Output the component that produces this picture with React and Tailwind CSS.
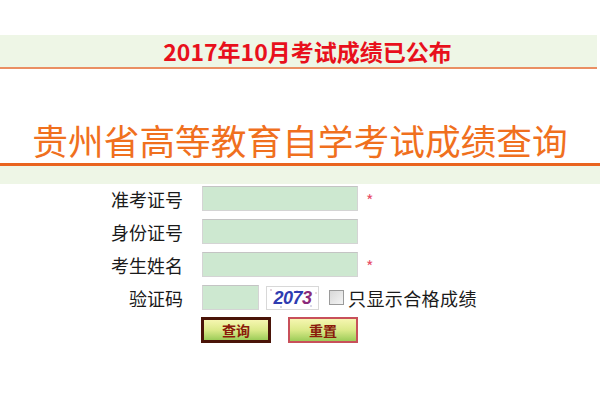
const font = { fontFamily: '"Noto Sans CJK SC", "Noto Sans", sans-serif' };

const fields = [
  { label: '准考证号', required: true },
  { label: '身份证号', required: false },
  { label: '考生姓名', required: true },
];

const Captcha = () => (
  <div className="relative w-[53px] h-[24px] bg-white border border-[#d8d8d8] flex items-center justify-center overflow-hidden">
    <svg className="absolute inset-0" width="53" height="24">
      <circle cx="4" cy="3" r="0.8" fill="#b9a" />
      <circle cx="14" cy="20" r="0.8" fill="#9ab" />
      <circle cx="30" cy="4" r="0.8" fill="#c9c" />
      <circle cx="44" cy="19" r="0.8" fill="#aac" />
      <circle cx="49" cy="6" r="0.8" fill="#caa" />
      <circle cx="22" cy="12" r="0.6" fill="#bbd" />
    </svg>
    <span className="relative text-[18px] font-bold italic leading-none tracking-[-0.5px] text-[#2e3cb0]" style={{ fontFamily: '"Liberation Sans", sans-serif' }}>
      207<span className="text-[#8a2a7a]">3</span>
    </span>
  </div>
);

const Button = ({ children, dark }) => (
  <button
    className={`w-[70px] h-[26px] flex items-center justify-center text-[14px] font-bold text-[#8a1a0a] bg-gradient-to-b from-[#f6f6b0] via-[#dcea8a] to-[#9ccc58] ${dark ? 'border-[3px] border-[#4a1408]' : 'border-2 border-[#c8505a]'}`}
    style={font}
  >
    {children}
  </button>
);

export default function App() {
  return (
    <div className="w-[600px] h-[400px] bg-white overflow-hidden" style={font}>
      <div className="h-[35px]" />
      <div className="w-[597px] h-[34px] bg-[#eef6e6] border-b-2 border-[#ea8f63] flex items-center justify-center">
        <span className="text-[23px] font-bold leading-none text-[#e8101c] pl-[18px]">2017年10月考试成绩已公布</span>
      </div>
      <div className="pt-[53px] pb-[5px] border-b-[3px] border-[#e9641f] text-center">
        <h1 className="text-[35.7px] leading-[36px] text-[#f0701e] whitespace-nowrap">贵州省高等教育自学考试成绩查询</h1>
      </div>
      <div className="h-[18px] bg-[#eef6e6]" />
      <div className="mt-[2px] flex flex-col gap-[8px]">
        {fields.map((f) => (
          <div key={f.label} className="flex items-center h-[25px]">
            <div className="w-[183px] text-right text-[18px] leading-none text-[#1a1a1a]">{f.label}</div>
            <div className="ml-[19px] w-[156px] h-[25px] bg-[#cde8d0] border border-[#d4d4d4] border-t-[#c4c4c4]" />
            {f.required && <span className="ml-[8px] text-[16px] leading-none text-[#e8506a] mt-[2px]">*</span>}
          </div>
        ))}
        <div className="flex items-center h-[25px]">
          <div className="w-[183px] text-right text-[18px] leading-none text-[#1a1a1a]">验证码</div>
          <div className="ml-[19px] w-[57px] h-[25px] bg-[#cde8d0] border border-[#d4d4d4] border-t-[#c4c4c4]" />
          <div className="ml-[7px]"><Captcha /></div>
          <div className="ml-[10px] w-[15px] h-[15px] border border-[#9a9a9a] bg-gradient-to-br from-[#d8d8d8] to-[#f4f4f4]" />
          <span className="ml-[4px] text-[18px] leading-none text-[#1a1a1a] tracking-[0.4px]">只显示合格成绩</span>
        </div>
        <div className="flex items-center gap-[17px] pl-[201px] -mt-[1px]">
          <Button dark>查询</Button>
          <Button>重置</Button>
        </div>
      </div>
    </div>
  );
}
